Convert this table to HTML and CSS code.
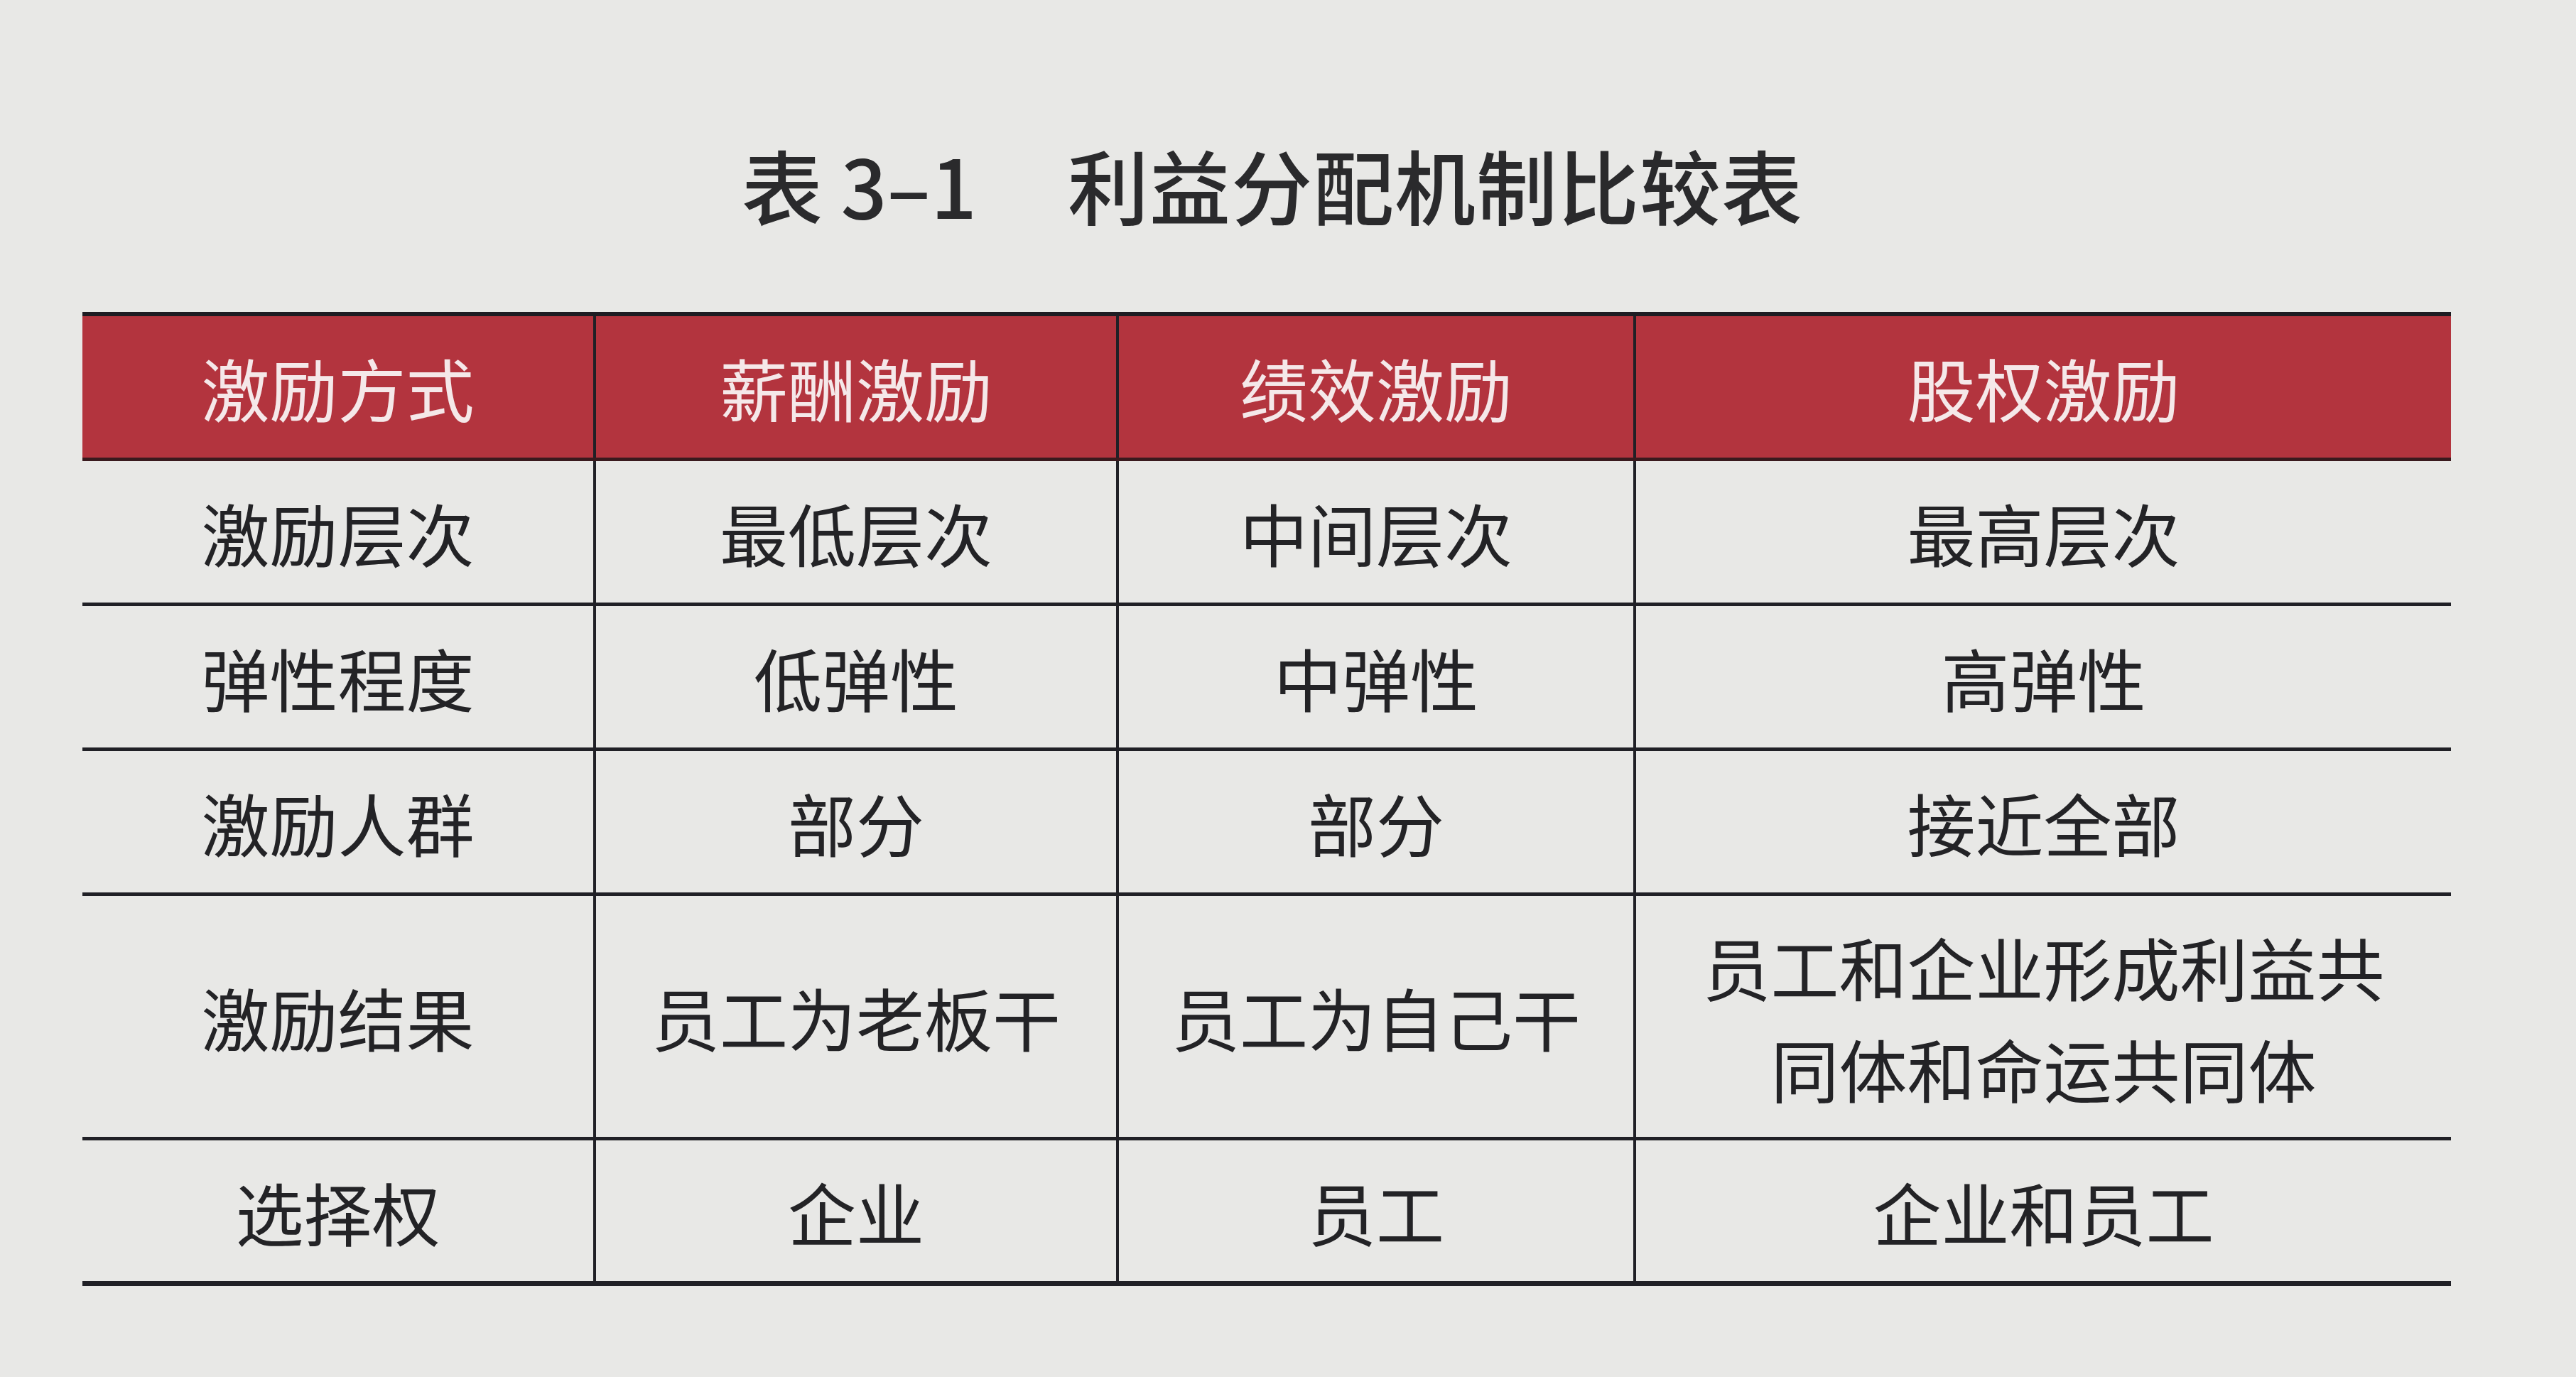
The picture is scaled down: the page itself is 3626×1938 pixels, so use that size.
FILE: index.html
```html
<!DOCTYPE html>
<html lang="zh-CN">
<head>
<meta charset="utf-8">
<title>表 3-1 利益分配机制比较表</title>
<link rel="stylesheet" href="styles.css">
</head>
<body>
<div class="page">
  <h1 class="caption"><span class="num">表 3–1</span><span class="name">利益分配机制比较表</span></h1>
  <table class="cmp">
    <colgroup>
      <col class="c1"><col class="c2"><col class="c3"><col class="c4">
    </colgroup>
    <thead>
      <tr class="head">
        <th>激励方式</th><th>薪酬激励</th><th>绩效激励</th><th>股权激励</th>
      </tr>
    </thead>
    <tbody>
      <tr><td>激励层次</td><td>最低层次</td><td>中间层次</td><td>最高层次</td></tr>
      <tr><td>弹性程度</td><td>低弹性</td><td>中弹性</td><td>高弹性</td></tr>
      <tr><td>激励人群</td><td>部分</td><td>部分</td><td>接近全部</td></tr>
      <tr class="tall"><td>激励结果</td><td>员工为老板干</td><td>员工为自己干</td><td>员工和企业形成利益共<br>同体和命运共同体</td></tr>
      <tr class="last"><td>选择权</td><td>企业</td><td>员工</td><td>企业和员工</td></tr>
    </tbody>
  </table>
</div>
</body>
</html>
```
FILE: styles.css
```css
html, body {
  margin: 0;
  padding: 0;
}
body {
  background: #e8e8e6;
  font-family: "Noto Sans CJK SC", "Noto Sans", sans-serif;
  color: #232326;
}
.page {
  width: 3334px;
  margin-left: 116px;
  padding-top: 194px;
}
.caption {
  margin: 0 0 115px 0;
  height: 130px;
  line-height: 130px;
  font-size: 114px;
  font-weight: 500;
  color: #2a2a2c;
  display: flex;
  justify-content: center;
  gap: 128px;
  padding-left: 16px;
}
.caption .name {
  letter-spacing: 1px;
}
.cmp {
  width: 100%;
  border-collapse: collapse;
  table-layout: fixed;
}
.c1 { width: 721px; }
.c2 { width: 736px; }
.c3 { width: 728px; }
.c4 { width: 1149px; }
.cmp th, .cmp td {
  padding: 0;
  text-align: center;
  vertical-align: middle;
  font-size: 96px;
  font-weight: 400;
  line-height: 143px;
  border-left: 4px solid #202026;
  border-right: 4px solid #202026;
  border-bottom: 5px solid #202026;
}
.cmp tr > :first-child { border-left: none; }
.cmp tr > :last-child { border-right: none; }
.head th {
  background: #b3343e;
  color: #f5e8e9;
  height: 199px;
  border-top: 6px solid #1e1c22;
  border-bottom: 5px solid #3a1a1e;
}
.cmp tbody td { height: 199px; }
.cmp tbody tr.tall td { height: 339px; }
.cmp tbody tr.last td {
  height: 198px;
  border-bottom: 7px solid #202026;
}
```
